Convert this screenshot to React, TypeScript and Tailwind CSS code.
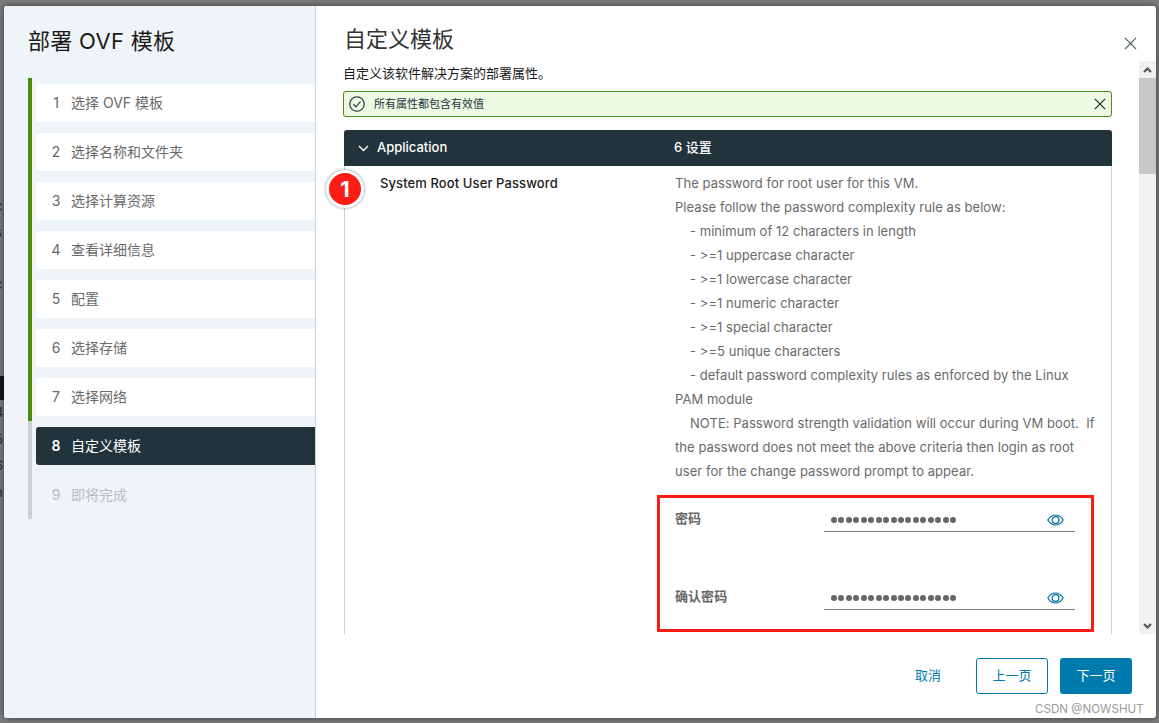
import React from "react";

const FONT = "font-['Inter','Noto_Sans_CJK_SC',sans-serif]";

const steps = [
  { n: 1, label: "选择 OVF 模板", state: "done" },
  { n: 2, label: "选择名称和文件夹", state: "done" },
  { n: 3, label: "选择计算资源", state: "done" },
  { n: 4, label: "查看详细信息", state: "done" },
  { n: 5, label: "配置", state: "done" },
  { n: 6, label: "选择存储", state: "done" },
  { n: 7, label: "选择网络", state: "done" },
  { n: 8, label: "自定义模板", state: "active" },
  { n: 9, label: "即将完成", state: "todo" },
];

const helpLines = [
  { text: "The password for root user for this VM.", indent: false },
  { text: "Please follow the password complexity rule as below:", indent: false },
  { text: "- minimum of 12 characters in length", indent: true },
  { text: "- >=1 uppercase character", indent: true },
  { text: "- >=1 lowercase character", indent: true },
  { text: "- >=1 numeric character", indent: true },
  { text: "- >=1 special character", indent: true },
  { text: "- >=5 unique characters", indent: true },
  { text: "- default password complexity rules as enforced by the Linux", indent: true },
  { text: "PAM module", indent: false },
  { text: "NOTE: Password strength validation will occur during VM boot.  If", indent: true },
  { text: "the password does not meet the above criteria then login as root", indent: false },
  { text: "user for the change password prompt to appear.", indent: false },
];

function CloseIcon({ size, color, weight = 1.2 }: { size: number; color: string; weight?: number }) {
  return (
    <svg width={size} height={size} viewBox="0 0 14 14" fill="none" stroke={color} strokeWidth={weight}>
      <path d="M1 1L13 13M13 1L1 13" />
    </svg>
  );
}

function EyeIcon() {
  return (
    <svg width="17" height="12" viewBox="0 0 17 12" fill="none" stroke="#006d9c" strokeWidth="1.2">
      <path d="M0.8 6C2.8 2.8 5.4 1 8.5 1C11.6 1 14.2 2.8 16.2 6C14.2 9.2 11.6 11 8.5 11C5.4 11 2.8 9.2 0.8 6Z" />
      <circle cx="8.5" cy="6" r="3.4" />
    </svg>
  );
}

function StepRow({ n, label, state }: { n: number; label: string; state: string }) {
  const bar = state === "done" ? "border-[#4b8b10]" : "border-[#c9d2d6]";
  let box = "bg-white text-[#6a6a6a]";
  if (state === "active") box = "bg-[#21333b] text-white";
  if (state === "todo") box = "text-[#b9bdbf]";
  return (
    <div className={`border-l-4 pl-1 pt-[6px] pb-[5px] ${bar}`}>
      <div className={`h-[38px] pb-[2px] flex items-center rounded-l-[3px] text-[14px] ${box}`}>
        <span className={`w-[35px] pl-[8px] pr-[3px] text-center shrink-0 ${state === "active" ? "font-semibold" : ""}`}>{n}</span>
        <span>{label}</span>
      </div>
    </div>
  );
}

function PasswordRow({ label, className }: { label: string; className: string }) {
  return (
    <div className={`flex items-start ${className}`}>
      <div className="w-[149px] text-[13px] font-semibold text-[#666] leading-[20px]">{label}</div>
      <div className="w-[251px] h-[24px] border-b border-[#6f7d84] flex items-center pl-[7px] pr-[11px] justify-between">
        <div className="flex gap-[1.44px]">
          {Array.from({ length: 17 }).map((_, i) => (
            <span key={i} className="w-[6px] h-[6px] rounded-full bg-[#666]" />
          ))}
        </div>
        <EyeIcon />
      </div>
    </div>
  );
}

function Scrollbar() {
  return (
    <div className="w-[17px] shrink-0 bg-[#f1f1f1] flex flex-col">
      <div className="h-[17px] flex items-center justify-center">
        <svg width="9" height="6" viewBox="0 0 9 6" fill="none" stroke="#505050" strokeWidth="2">
          <path d="M1 5L4.5 1.5L8 5" />
        </svg>
      </div>
      <div className="h-[96px] bg-[#c8c8c8]" />
      <div className="flex-1" />
      <div className="h-[17px] flex items-center justify-center">
        <svg width="9" height="6" viewBox="0 0 9 6" fill="none" stroke="#505050" strokeWidth="2">
          <path d="M1 1L4.5 4.5L8 1" />
        </svg>
      </div>
    </div>
  );
}

export default function App() {
  return (
    <div className={`relative w-[1159px] h-[723px] overflow-hidden bg-[#7c7c7c] pt-[6px] pl-[4px] pr-[3px] pb-[5px] ${FONT}`}>
      {/* page behind the dialog */}
      <div className="absolute left-0 top-[376px] w-[4px] h-[24px] bg-[#14181b]" />
      <div className="absolute left-0 top-[196px] text-[13px] leading-[20px] text-[#2a2a2a] -translate-x-[5px]">
        <div>c</div>
        <div className="mt-[6px]">s</div>
        <div className="mt-[32px]">c</div>
      </div>
      <div className="absolute left-0 top-[402px] text-[13px] leading-[20px] text-[#2a2a2a] -translate-x-[5px]">
        <div>4</div>
        <div className="mt-[7px]">5</div>
        <div className="mt-[6px]">6</div>
        <div className="mt-[7px]">n</div>
      </div>

      <div className="relative h-full flex rounded-[3px] overflow-hidden bg-white shadow-[0_0_6px_rgba(0,0,0,0.55)]">
        {/* wizard steps */}
        <div className="w-[312px] shrink-0 bg-[#eff4f8] border-r border-[#c9d2d6] pl-[24px]">
          <h1 className="h-[72px] pt-[20px] text-[22px] tracking-[0.3px] leading-[30px] font-normal text-[#1a1a1a]">部署 OVF 模板</h1>
          <div>
            {steps.map((s) => (
              <StepRow key={s.n} n={s.n} label={s.label} state={s.state} />
            ))}
          </div>
        </div>

        {/* content */}
        <div className="relative flex-1 min-w-0 flex flex-col">
          <div className="h-[55px] shrink-0 pl-[28px] pt-[18px] text-[22px] leading-[30px] text-[#333]">自定义模板</div>
          <div className="absolute right-[19px] top-[31px]">
            <CloseIcon size={13} color="#45555c" />
          </div>

          <div className="h-[573px] shrink-0 flex overflow-hidden">
            <div className="flex-1 min-w-0 overflow-hidden pl-[27px] pr-[27px]">
              <p className="pt-[3px] h-[30px] text-[13px] leading-[18px] text-[#1a1a1a]">自定义该软件解决方案的部署属性。</p>
              <div className="h-[26px] flex items-center rounded-[3px] border border-[#4b8b10] bg-[#edf9e3] pl-[5px] pr-[5px] text-[11px] text-[#24343b]">
                <svg width="16" height="16" viewBox="0 0 16 16" fill="none" stroke="#33444c" strokeWidth="1.3">
                  <circle cx="8" cy="8" r="7.2" />
                  <path d="M4.4 8.2L7 10.8L11.6 5.4" />
                </svg>
                <span className="ml-[9px] flex-1">所有属性都包含有效值</span>
                <CloseIcon size={12} color="#24343b" weight={1.5} />
              </div>

              <div className="mt-[13px] ml-[1px] border-x border-[#c9d2d6] rounded-t-[3px]">
                <div className="h-[36px] -mx-[1px] flex items-center bg-[#21333b] text-white text-[13px] font-medium rounded-t-[3px]">
                  <svg className="ml-[14px]" width="11" height="7" viewBox="0 0 11 7" fill="none" stroke="#fff" strokeWidth="1.4">
                    <path d="M1 1L5.5 5.5L10 1" />
                  </svg>
                  <span className="ml-[8px] w-[297px]">Application</span>
                  <span>6 设置</span>
                </div>
                <div className="flex pt-[5px]">
                  <div className="w-[330px] shrink-0 pl-[35px] text-[13px] tracking-[0.1px] leading-[24px] font-medium text-[#1c1c1c]">System Root User Password</div>
                  <div className="flex-1 min-w-0 text-[13px] tracking-[0.05px] leading-[24px] text-[#6a6a6a]">
                    {helpLines.map((l, i) => (
                      <div key={i} className={`whitespace-pre ${l.indent ? "pl-[15px]" : ""}`}>
                        {l.text}
                      </div>
                    ))}
                    <PasswordRow label="密码" className="mt-[25px]" />
                    <PasswordRow label="确认密码" className="mt-[54px]" />
                    <div className="h-[30px]" />
                  </div>
                </div>
              </div>
            </div>
            <Scrollbar />
          </div>

          <div className="flex-1 flex items-start justify-end pt-[24px] pr-[24px] text-[13px]">
            <span className="mr-[35px] h-[36px] flex items-center text-[#0079ad]">取消</span>
            <span className="w-[72px] h-[36px] flex items-center justify-center rounded-[3px] border border-[#0079ad] text-[#0079ad]">上一页</span>
            <span className="ml-[12px] w-[72px] h-[36px] flex items-center justify-center rounded-[3px] bg-[#0079ad] text-white">下一页</span>
          </div>
        </div>
      </div>

      {/* screenshot annotations */}
      <div className="absolute left-[326px] top-[170px] w-[38px] h-[38px] rounded-full bg-[#fb1d15] border-[3px] border-white shadow-[0_0_3px_rgba(0,0,0,0.5)] flex items-center justify-center text-white text-[22px] font-bold">
        1
      </div>
      <div className="absolute left-[657px] top-[495px] w-[437px] h-[137px] border-[3px] border-[#fb1d15]" />
      <div className="absolute left-[1035px] top-[702px] text-[11.6px] leading-[14px] text-[#9a9a9a]">CSDN @NOWSHUT</div>
    </div>
  );
}
